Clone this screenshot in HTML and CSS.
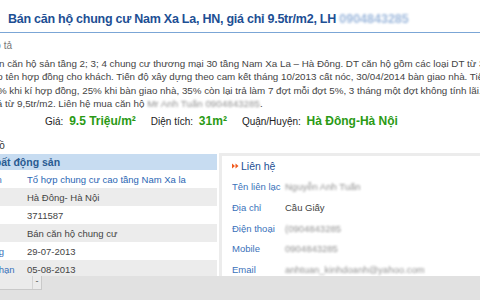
FILE: index.html
```html
<!DOCTYPE html>
<html lang="vi">
<head>
  <meta charset="UTF-8">
  <title>Bán căn hộ chung cư Nam Xa La</title>
  <link rel="stylesheet" href="styles.css">
</head>
<body>

  <h1 class="title">Bán căn hộ chung cư Nam Xa La, HN, giá chỉ 9.5tr/m2, LH <span class="blur">0904843285</span></h1>

  <div class="desc">
    <div class="desc-head">Mô tả</div>
    <p class="desc-text">
      <span>Bán căn hộ sản tầng 2; 3; 4 chung cư thương mại 30 tầng Nam Xa La – Hà Đông. DT căn hộ gồm các loại DT từ 35m2 đến 80m2.</span>
      <span>cho tên hợp đồng cho khách. Tiến độ xây dựng theo cam kết tháng 10/2013 cất nóc, 30/04/2014 bàn giao nhà. Tiến độ</span>
      <span>40% khi kí hợp đồng, 25% khi bàn giao nhà, 35% còn lại trả làm 7 đợt mỗi đợt 5%, 3 tháng một đợt không tính lãi.</span>
      <span>Giá từ 9,5tr/m2. Liên hệ mua căn hộ <span class="blur">Mr Anh Tuấn 0904843285</span>.</span>
    </p>
  </div>

  <div class="price">
    <span class="p-item">Giá: <b>9.5 Triệu/m²</b></span>
    <span class="p-item">Diện tích: <b>31m²</b></span>
    <span class="p-item">Quận/Huyện: <b>Hà Đông-Hà Nội</b></span>
  </div>

  <div class="map-head">Bản đồ</div>

  <div class="main">
    <table class="info">
      <tr class="info-head"><th colspan="2">Thông tin bất động sản</th></tr>
      <tr><td class="lbl">Tên dự án</td><td class="link">Tổ hợp chung cư cao tầng Nam Xa la</td></tr>
      <tr class="alt"><td class="lbl">Địa chỉ</td><td>Hà Đông- Hà Nội</td></tr>
      <tr><td class="lbl">Mã số</td><td>3711587</td></tr>
      <tr class="alt"><td class="lbl">Loại tin</td><td>Bán căn hộ chung cư</td></tr>
      <tr><td class="lbl">Ngày đăng</td><td>29-07-2013</td></tr>
      <tr class="alt"><td class="lbl">Ngày hết hạn</td><td>05-08-2013</td></tr>
    </table>

    <div class="contact">
      <div class="contact-head">
        <svg class="arrows" width="7" height="6" viewBox="0 0 7 6"><path d="M0 0.5 L3 3 L0 5.5 Z M3.5 0.5 L6.5 3 L3.5 5.5 Z" fill="#f05a1e"/></svg>Liên hệ
      </div>
      <div class="row"><span class="c-lbl">Tên liên lạc</span><span class="blur">Nguyễn Anh Tuấn</span></div>
      <div class="row"><span class="c-lbl">Địa chỉ</span><span>Cầu Giấy</span></div>
      <div class="row"><span class="c-lbl">Điện thoại</span><span class="blur">(0904843285</span></div>
      <div class="row"><span class="c-lbl">Mobile</span><span class="blur">0904843285</span></div>
      <div class="row"><span class="c-lbl">Email</span><span class="blur">anhtuan_kinhdoanh@yahoo.com</span></div>
    </div>
  </div>

  <div class="toolbar">
    <div class="select"><span class="select-btn">-</span></div>
  </div>

</body>
</html>
```

FILE: styles.css
```css
body {
  margin: 0;
  width: 480px;
  height: 300px;
  overflow: hidden;
  background: #fff;
  font-family: "Liberation Sans", Arial, sans-serif;
  font-size: 10px;
  color: #444;
}
.blur {
  filter: blur(1.1px);
  opacity: 0.6;
}
.title {
  margin: 0;
  padding: 10px 8px 4px;
  font-size: 12.5px;
  letter-spacing: -0.25px;
  line-height: 18px;
  font-weight: bold;
  color: #1d4f94;
  white-space: nowrap;
  border-bottom: 1px solid #7ba6d6;
}
.title .blur {
  color: #5b88c4;
  letter-spacing: 0;
}
.desc {
  margin-left: -13px;
  white-space: nowrap;
}
.desc-head {
  margin-top: 6px;
  line-height: 14px;
  color: #777;
}
.desc-text {
  margin: 4px 0 0;
  font-size: 9.8px;
  line-height: 13.33px;
}
.desc-text > span {
  display: block;
}
.price {
  display: flex;
  gap: 15px;
  margin-top: 3px;
  padding-left: 45px;
  line-height: 16px;
  color: #222;
}
.price b {
  font-size: 12px;
  color: #2a9a14;
  margin-left: 3px;
}
.map-head {
  margin: 10px 0 0 -27px;
  line-height: 12px;
  color: #333;
}
.main {
  display: flex;
  margin-top: 1px;
  margin-left: -60px;
  font-size: 9.5px;
}
.info {
  width: 277px;
  margin-top: 1px;
  border-collapse: collapse;
  align-self: flex-start;
  white-space: nowrap;
}
.info th {
  background: #c7dcf1;
  color: #2a5b92;
  text-align: left;
  height: 16px;
  padding: 0 0 0 4px;
  font-size: 10.5px;
}
.info td {
  height: 18px;
  padding: 0;
  color: #444;
}
.info .lbl {
  width: 69px;
  padding-left: 18px;
  color: #3a72ba;
}
.info .link {
  color: #2a66b4;
}
.info .alt td {
  background: #ececec;
}
.contact {
  flex: 1;
  margin-left: 2px;
  border-top: 3px solid #ececec;
  border-left: 3px solid #ececec;
  padding: 2px 0 0 10px;
}
.contact-head {
  display: flex;
  align-items: center;
  color: #1d4f94;
  font-size: 10.5px;
  line-height: 16px;
  margin-bottom: 3px;
}
.arrows {
  margin-right: 2px;
}
.row {
  display: flex;
  line-height: 20.7px;
  white-space: nowrap;
}
.c-lbl {
  width: 53px;
  color: #3a72ba;
}
.toolbar {
  position: fixed;
  left: 0;
  right: 0;
  bottom: 0;
  height: 24px;
  background: #e1e1e1;
}
.select {
  width: 41px;
  height: 13px;
  background: #ebebeb;
  border-right: 1px solid #c9c9c9;
  border-bottom: 1px solid #c9c9c9;
  display: flex;
  justify-content: flex-end;
}
.select-btn {
  width: 8px;
  border-left: 1px solid #d4d4d4;
  color: #555;
  font-size: 9px;
  line-height: 11px;
  text-align: center;
}
```
